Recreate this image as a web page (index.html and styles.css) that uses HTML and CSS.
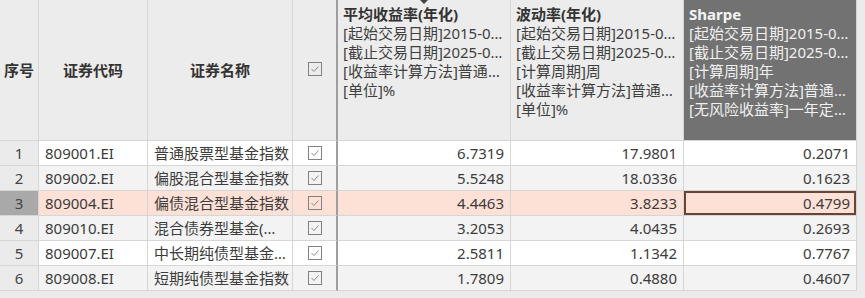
FILE: index.html
```html
<!DOCTYPE html>
<html lang="zh-CN">
<head>
<meta charset="utf-8">
<title>基金指数</title>
<link rel="stylesheet" href="styles.css">
</head>
<body>
<div class="sheet">
  <div class="hc hc-mid">序号</div>
  <div class="hc hc-mid">证券代码</div>
  <div class="hc hc-mid">证券名称</div>
  <div class="hc hc-mid frz"><span class="cb"><svg viewBox="0 0 14 14" width="14" height="14"><polyline points="3.5,7 6,9.5 10.5,4.5" fill="none" stroke="#8a8a8a" stroke-width="1"/></svg></span></div>
  <div class="hc hc-top sorted">
    <span class="sort-tri"></span>
    <div class="ht">平均收益率(年化)</div>
    <div class="hl">[起始交易日期]2015-01-01</div>
    <div class="hl">[截止交易日期]2025-06-30</div>
    <div class="hl">[收益率计算方法]普通收益率</div>
    <div class="hl">[单位]%</div>
  </div>
  <div class="hc hc-top">
    <div class="ht">波动率(年化)</div>
    <div class="hl">[起始交易日期]2015-01-01</div>
    <div class="hl">[截止交易日期]2025-06-30</div>
    <div class="hl">[计算周期]周</div>
    <div class="hl">[收益率计算方法]普通收益率</div>
    <div class="hl">[单位]%</div>
  </div>
  <div class="hc hc-top hc-sel">
    <div class="ht">Sharpe</div>
    <div class="hl">[起始交易日期]2015-01-01</div>
    <div class="hl">[截止交易日期]2025-06-30</div>
    <div class="hl">[计算周期]年</div>
    <div class="hl">[收益率计算方法]普通收益率</div>
    <div class="hl">[无风险收益率]一年定存利率</div>
  </div>

  <div class="row odd">
    <div class="c num">1</div><div class="c txt">809001.EI</div><div class="c txt">普通股票型基金指数</div>
    <div class="c chk frz"><span class="cb"><svg viewBox="0 0 14 14" width="14" height="14"><polyline points="3.5,7 6,9.5 10.5,4.5" fill="none" stroke="#8a8a8a" stroke-width="1"/></svg></span></div>
    <div class="c val">6.7319</div><div class="c val">17.9801</div><div class="c val">0.2071</div>
  </div>
  <div class="row even">
    <div class="c num">2</div><div class="c txt">809002.EI</div><div class="c txt">偏股混合型基金指数</div>
    <div class="c chk frz"><span class="cb"><svg viewBox="0 0 14 14" width="14" height="14"><polyline points="3.5,7 6,9.5 10.5,4.5" fill="none" stroke="#8a8a8a" stroke-width="1"/></svg></span></div>
    <div class="c val">5.5248</div><div class="c val">18.0336</div><div class="c val">0.1623</div>
  </div>
  <div class="row sel">
    <div class="c num">3</div><div class="c txt">809004.EI</div><div class="c txt">偏债混合型基金指数</div>
    <div class="c chk frz"><span class="cb"><svg viewBox="0 0 14 14" width="14" height="14"><polyline points="3.5,7 6,9.5 10.5,4.5" fill="none" stroke="#8a8a8a" stroke-width="1"/></svg></span></div>
    <div class="c val">4.4463</div><div class="c val">3.8233</div><div class="c val active">0.4799</div>
  </div>
  <div class="row even">
    <div class="c num">4</div><div class="c txt">809010.EI</div><div class="c txt">混合债券型基金(二级)指数</div>
    <div class="c chk frz"><span class="cb"><svg viewBox="0 0 14 14" width="14" height="14"><polyline points="3.5,7 6,9.5 10.5,4.5" fill="none" stroke="#8a8a8a" stroke-width="1"/></svg></span></div>
    <div class="c val">3.2053</div><div class="c val">4.0435</div><div class="c val">0.2693</div>
  </div>
  <div class="row odd">
    <div class="c num">5</div><div class="c txt">809007.EI</div><div class="c txt">中长期纯债型基金指数</div>
    <div class="c chk frz"><span class="cb"><svg viewBox="0 0 14 14" width="14" height="14"><polyline points="3.5,7 6,9.5 10.5,4.5" fill="none" stroke="#8a8a8a" stroke-width="1"/></svg></span></div>
    <div class="c val">2.5811</div><div class="c val">1.1342</div><div class="c val">0.7767</div>
  </div>
  <div class="row even">
    <div class="c num">6</div><div class="c txt">809008.EI</div><div class="c txt">短期纯债型基金指数</div>
    <div class="c chk frz"><span class="cb"><svg viewBox="0 0 14 14" width="14" height="14"><polyline points="3.5,7 6,9.5 10.5,4.5" fill="none" stroke="#8a8a8a" stroke-width="1"/></svg></span></div>
    <div class="c val">1.7809</div><div class="c val">0.4880</div><div class="c val">0.4607</div>
  </div>
</div>
</body>
</html>
```

FILE: styles.css
```css
html, body {
  margin: 0;
  padding: 0;
  background: #ebebeb;
}
body {
  font-family: "Noto Sans", "Noto Sans CJK SC", sans-serif;
  font-size: 15px;
  color: #3c3c3c;
}
.sheet {
  display: grid;
  grid-template-columns: 39px 109px 145px 45px 173px 173px 173px;
  grid-template-rows: 141px repeat(6, 25px);
  width: 857px;
}
.row {
  display: contents;
}
.hc, .c {
  box-sizing: border-box;
  border-right: 1px solid #d6d6d6;
  border-bottom: 1px solid #d6d6d6;
  overflow: hidden;
  white-space: nowrap;
}
.frz {
  border-right: 2px solid #9e9e9e;
}
.hc {
  background: #ececec;
  color: #333;
  position: relative;
}
.hc-mid {
  display: flex;
  align-items: center;
  justify-content: center;
  font-weight: bold;
  padding-bottom: 2px;
}
.hc-top {
  padding: 5px 4px 0 5px;
  line-height: 19px;
}
.ht {
  font-weight: bold;
}
.hl {
  overflow: hidden;
  text-overflow: ellipsis;
  white-space: nowrap;
  color: #3f3f3f;
}
.hc-sel {
  background: #727272;
  color: #f4f4f4;
}
.hc-sel .hl {
  color: #f0f0f0;
}
.sort-tri {
  position: absolute;
  top: 0;
  left: 50%;
  margin-left: -4px;
  width: 0;
  height: 0;
  border-left: 4px solid transparent;
  border-right: 4px solid transparent;
  border-top: 4px solid #444;
}
.c {
  line-height: 24px;
}
.num {
  background: #ebebeb;
  text-align: center;
  color: #444;
}
.txt {
  padding: 0 2px 0 6px;
  text-overflow: ellipsis;
}
.val {
  text-align: right;
  padding-right: 6px;
}
.chk, .hc-mid.frz {
  display: flex;
  align-items: center;
  justify-content: center;
}
.cb {
  display: block;
  width: 14px;
  height: 14px;
  box-sizing: border-box;
  border: 1px solid #808080;
  position: relative;
}
.cb svg {
  position: absolute;
  left: -1px;
  top: -1px;
}
.odd .c { background: #ffffff; }
.even .c { background: #f3f3f3; }
.sel .c { background: #fde1d6; }
.odd .num, .even .num { background: #ebebeb; }
.sel .num { background: #a9a9a9; }
.active {
  box-shadow: inset 0 0 0 2px #6a4535;
}
```
